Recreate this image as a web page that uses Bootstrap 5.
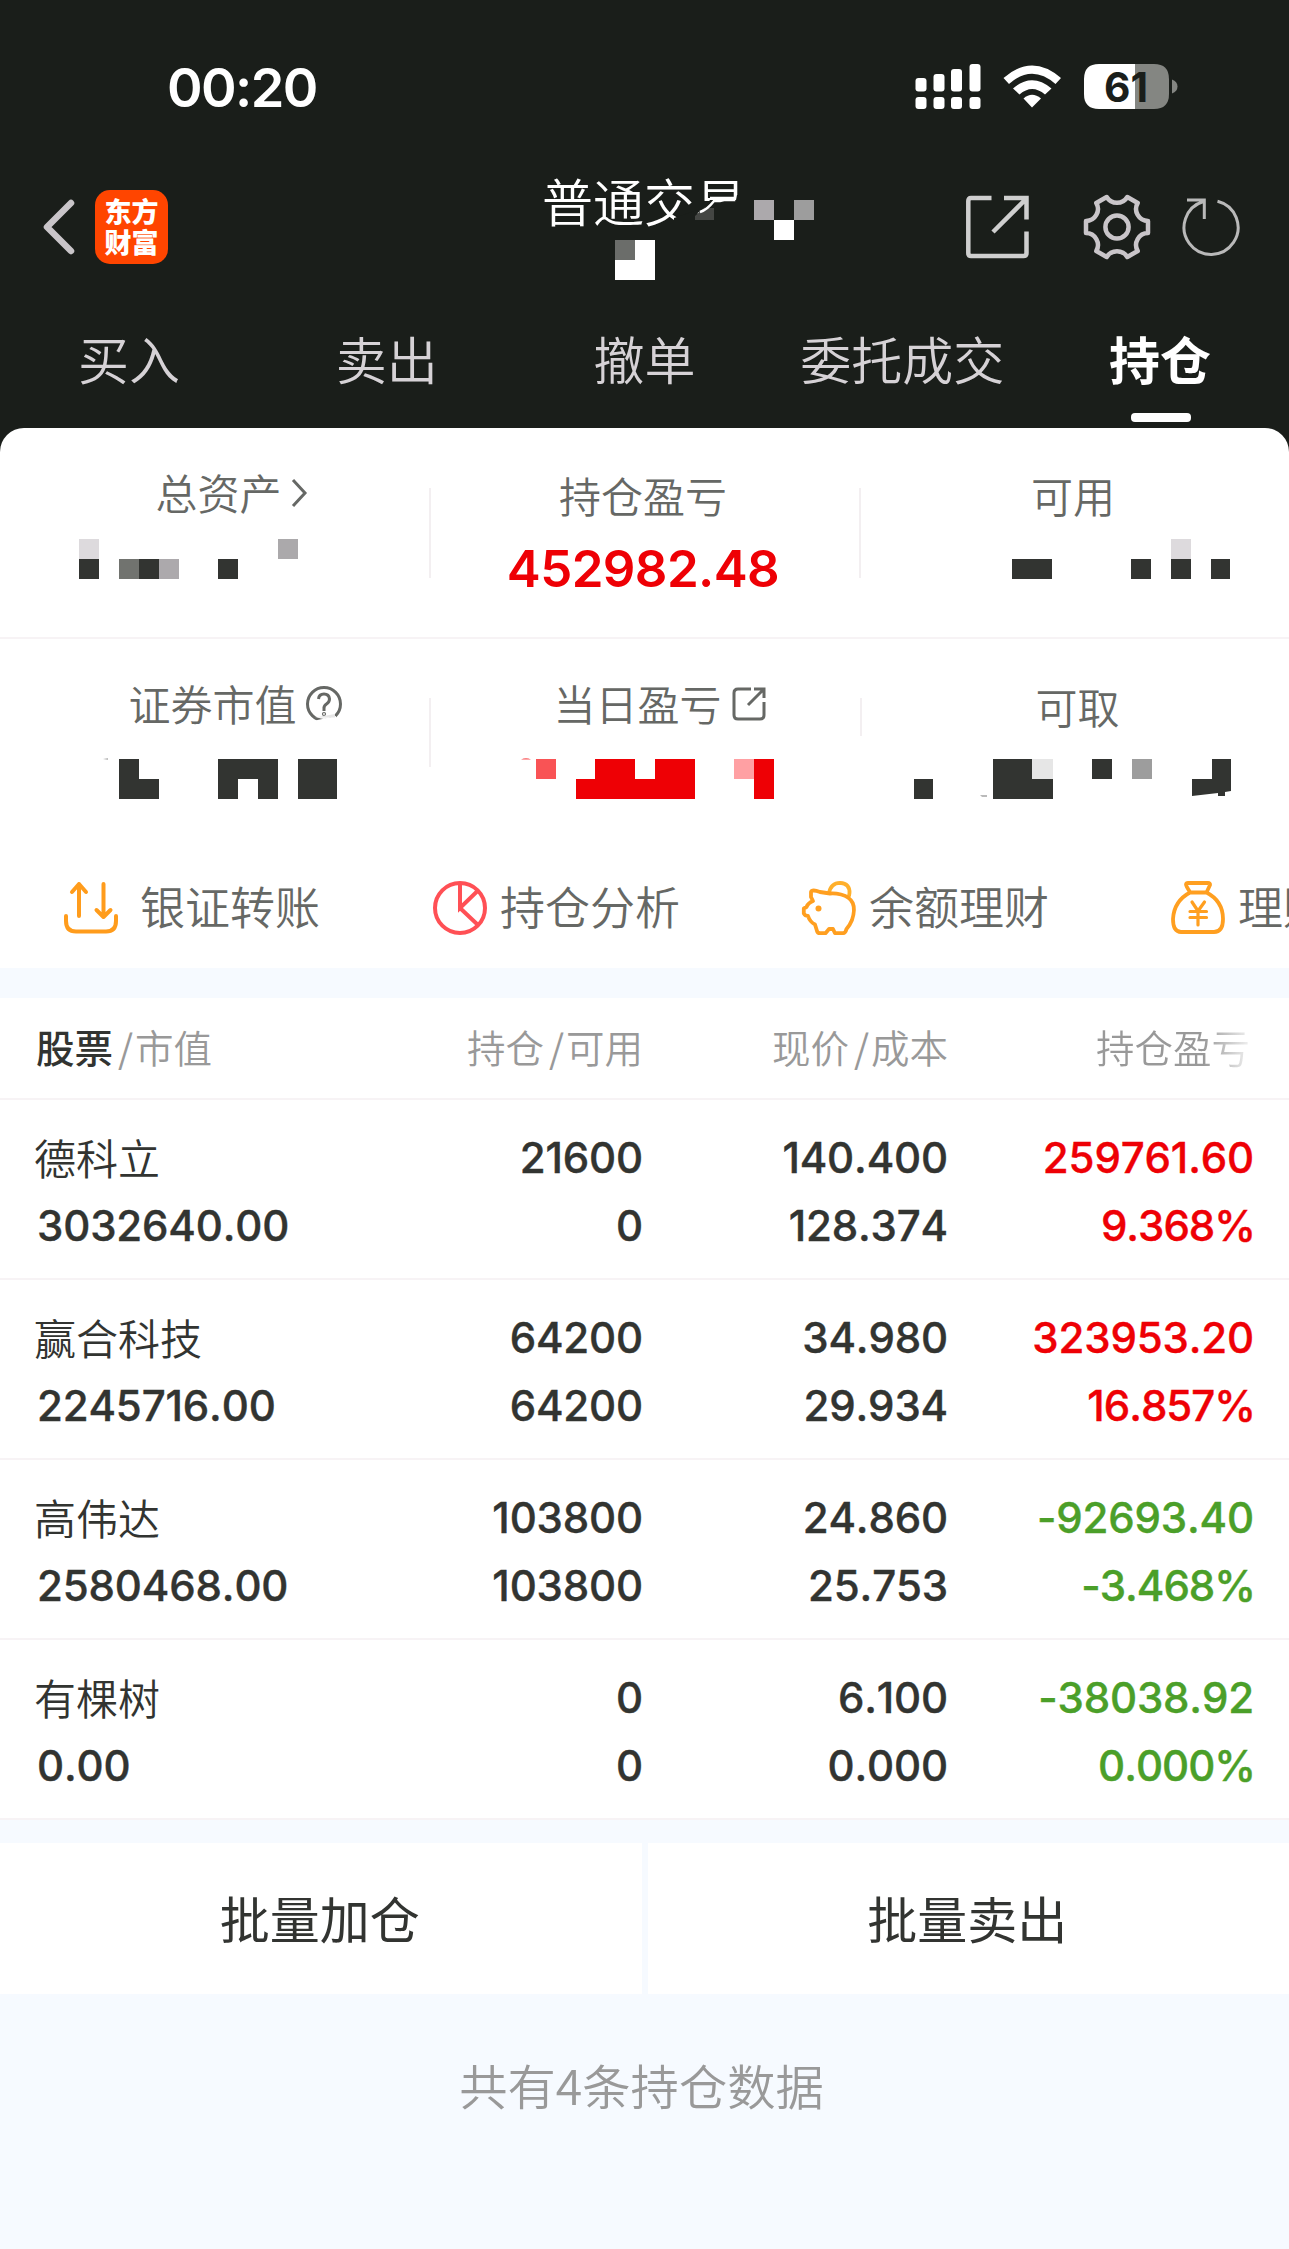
<!DOCTYPE html>
<html lang="zh-CN">
<head>
<meta charset="utf-8">
<meta name="viewport" content="width=device-width, initial-scale=1">
<title>持仓</title>
<link href="https://cdn.jsdelivr.net/npm/bootstrap@5.3.0/dist/css/bootstrap.min.css" rel="stylesheet">
<style>
  :root { --ink:#323431; --night:#1a1e1a; --mute:#666865; --up:#ee0005; --down:#4b9f29; --mist:#f6faff; --rule:#f7f3f5; }
  body { font-family:"Noto Sans CJK SC",sans-serif; font-weight:350; background:var(--mist); color:var(--ink); line-height:1; width:1289px; overflow-x:hidden; }
  svg { display:block; flex:none; overflow:visible; }
  .num { font-family:Inter,sans-serif; font-kerning:none; }
  .top-area { background:var(--night); height:428px; }
  .status-bar { height:150px; padding:24px 111px 0 167px; }
  .clock { font-size:54px; font-weight:600; line-height:54px; letter-spacing:-1.6px; padding-top:2px; }
  .title-bar { height:152px; padding:2px 48px 0 43px; }
  .app-logo { width:73px; height:74px; border-radius:15px; background:#ff4500; color:#fff; font:900 27px/31px "Noto Sans CJK SC",sans-serif; margin-left:20px; padding-top:5px; }
  .page-title { width:204px; height:152px; font-size:51px; line-height:60px; padding-top:20px; color:#fff; margin-left:374px; margin-top:-2px; white-space:nowrap; }
  .page-title svg { left:2px; top:0; }
  .tab-row { height:126px; }
  .tab-row .nav-link { font-size:51px; line-height:60px; padding:26px 0 0; color:#d6d2d6; height:126px; white-space:nowrap; }
  .tab-row .nav-link.active { color:#fff; font-weight:700; }
  .tab-row .nav-link.active::after { content:""; display:block; width:60px; height:9px; border-radius:4px; background:#fff; margin:25px auto 0; position:relative; left:1px; }
  .panel-wrap { background:var(--night); }
  .panel { background:#fff; border-radius:24px 24px 0 0; height:540px; }
  .stats-a { height:211px; border-bottom:2px solid var(--rule); }
  .stats-b { height:209px; }
  .stat { width:429px; }
  .stat-name { font-size:42px; line-height:48px; color:var(--mute); height:111px; padding-top:43px; }
  .stats-b .stat-name { height:120px; padding-top:40px; }
  .stat-name.raised { padding-top:40px; }
  .stats-b .stat-name.lowered { padding-top:43px; }
  .shift { margin-left:-6px; margin-right:6px; }
  .stat-value { font-size:51px; font-weight:600; line-height:60px; color:var(--up); letter-spacing:-.6px; }
  .divider { width:2px; background:#f3eff1; margin-top:60px; height:90px; flex:none; }
  .divider.cut { height:69px; margin-top:59px; } .divider.short { height:38px; margin-top:59px; }
  .tools { height:120px; padding-left:64px; }
  .tool { width:369px; flex:none; font-size:45px; line-height:54px; color:var(--mute); white-space:nowrap; }
  .tool span { margin:-2px 0 2px -1px; }
  .holdings { margin-top:30px; background:#fff; }
  .line-row { padding:0 35px 0 36px; border-bottom:2px solid var(--rule); }
  .c1 { width:301px; flex:none; } .c2 { width:306px; flex:none; } .c3 { width:305px; flex:none; } .c4 { width:306px; flex:none; }
  .head-row { height:102px; font-size:38.5px; line-height:97px; color:#999; white-space:nowrap; }
  .head-row b { color:var(--ink); font-weight:500; }
  .slash { padding:0 2px 0 5px; font-weight:400; }
  .fade-tail { background:linear-gradient(90deg,#999 0 68%,#ffffff00 102%); -webkit-background-clip:text; background-clip:text; color:transparent; padding-right:4px; }
  .stock { height:180px; padding-top:24px; font-size:42px; font-weight:500; line-height:68px; }
  .stock .name { font-size:42px; font-weight:350; margin:-1px 0 1px -2px; }
  .stock .num { -webkit-text-stroke:.4px currentColor; letter-spacing:-.15px; }
  .c1 .num { padding-left:1px; }
  .pct { letter-spacing:-1px; margin-right:-1px; }
  .rise { color:var(--up); } .fall { color:var(--down); }
  .bulk { margin-top:23px; gap:6px; height:151px; }
  .bulk .btn { background:#fff; border-radius:0; border:0; font-size:50px; color:var(--ink); padding:0 2px 3px 0; }
  .tally { font-size:48.3px; line-height:60px; color:#999; margin-top:60px; padding-right:6px; }
</style>
<script src="https://cdn.jsdelivr.net/npm/bootstrap@5.3.0/dist/js/bootstrap.bundle.min.js"></script>
</head>
<body>
<header class="top-area">
  <div class="status-bar d-flex justify-content-between align-items-center text-white">
    <span class="clock num">00:20</span>
    <svg width="263" height="46" viewBox="0 0 263 46">
      <g fill="#fff">
        <rect x="0.5" y="14" width="11" height="13.5" rx="3"/><rect x="18.5" y="10" width="11" height="17.5" rx="3"/><rect x="36" y="5" width="11" height="22.5" rx="3"/><rect x="54.500" y="0" width="11" height="27.500" rx="3"/>
        <rect x="0.500" y="33" width="11" height="12" rx="3"/><rect x="18.500" y="33" width="11" height="12" rx="3"/><rect x="36" y="33" width="11" height="12" rx="3"/><rect x="54.500" y="33" width="11" height="12" rx="3"/>
        <path d="M88.500 14Q117-11 146 14L140.500 20Q117-.5 94 20Z"/>
        <path d="M98 24.500Q117 8 136.500 24.500L130 30.500Q117 19.500 104.500 30.500Z"/>
        <path d="M108.500 34.500Q117 27 126 34.500L117 43.500Z"/>
      </g>
      <path d="M220 0h19q15 0 15 15v15q0 15-15 15h-19z" fill="#848682"/>
      <path d="M220 0h-36q-15 0-15 15v15q0 15 15 15h36z" fill="#fff"/>
      <path d="M257 15.500q5.500 2 5.500 7t-5.500 7z" fill="#848682"/>
      <text x="189" y="37.500" font-family="Inter,sans-serif" font-weight="700" font-size="41" fill="#1a1e1a" textLength="44" lengthAdjust="spacingAndGlyphs">61</text>
    </svg>
  </div>
  <div class="title-bar d-flex align-items-center">
    <svg width="32" height="56" viewBox="0 0 32 56"><path d="M28 4L4 28L28 52" fill="none" stroke="#c9c5c9" stroke-width="6.500" stroke-linecap="round" stroke-linejoin="round"/></svg>
    <div class="app-logo text-center">东方<br>财富</div>
    <div class="page-title position-relative">普通交易
      <svg class="position-absolute" width="290" height="152" viewBox="0 0 290 152">
        <path d="M130 78V68L153 60L154 66L166 50L192 50L193 45H194V20H220V82H130Z" fill="#1a1e1a"/>
        <path d="M151 70V66L160 58H170V70Z" fill="#444643"/>
        <path d="M166 48H190V50H180L176 51L170 51Q163 60 156 62" fill="none" stroke="#fff" stroke-width="2.500"/>
        <path d="M210 50h20v20h-20z" fill="#aca9ac"/><path d="M250 50h20v20h-20z" fill="#9d9d9d"/><path d="M230 70h20v20h-20z" fill="#fff"/>
        <path d="M71 90h40v40h-40z" fill="#fff"/><path d="M71 90h20v20h-20z" fill="#6b6d6a"/>
      </svg>
    </div>
    <div class="d-flex align-items-center ms-auto">
      <svg width="63" height="64" viewBox="0 0 63 64" fill="none" stroke="#cfcfcf" stroke-width="4.500"><path d="M25.500 3H5Q2.300 3 2.300 6V58Q2.300 61 5 61H57.500Q60.500 61 60.500 58V36.500M38 3H60.500V24.500M60 4L27 37"/></svg>
      <svg width="66" height="66" viewBox="-33 -33 66 66" fill="none" stroke="#c9c5c9" stroke-width="4.500" stroke-linejoin="round" style="margin-left:55px"><path d="M31 6A12 12 0 0 0 20.700 24L10.300 30A12 12 0 0 0-10.300 30L-20.700 24A12 12 0 0 0-31 6V-6A12 12 0 0 0-20.700-24L-10.300-30A12 12 0 0 0 10.300-30L20.700-24A12 12 0 0 0 31-6Z"/><circle r="11.600"/></svg>
      <svg width="58" height="60" viewBox="0 0 58 60" fill="none" stroke="#b9b9b9" stroke-width="3" style="margin-left:33px"><path d="M34.500 4.200A27 27 0 1 1 20.500 4.500M4 3H21.300V22"/></svg>
    </div>
  </div>
  <nav class="tab-row nav nav-fill flex-nowrap">
    <a class="nav-link w-100">买入</a><a class="nav-link w-100">卖出</a><a class="nav-link w-100">撤单</a><a class="nav-link w-100">委托成交</a><a class="nav-link w-100 active">持仓</a>
  </nav>
</header>

<main>
<div class="panel-wrap"><section class="panel">
  <div class="stats-a d-flex">
    <div class="stat">
      <div class="stat-name raised d-flex justify-content-center ps-4 ms-2"><span class="ps-1">总资产</span><svg width="24" height="30" viewBox="0 0 24 30" class="mt-2 ms-1"><path d="M6 3L18 16L6 29" transform="translate(1 1)" fill="none" stroke="#666865" stroke-width="3"/></svg></div>
      <svg width="429" height="40" viewBox="0 0 429 40" shape-rendering="crispEdges"><path d="M79 0h20v20h-20z" fill="#dddadd"/><path d="M278 0h20v20h-20z" fill="#aba9ab"/><path d="M79 20h20v20h-20zM139 20h20v20h-20zM218 20h20v20h-20z" fill="#323431"/><path d="M119 20h20v20h-20z" fill="#71736f"/><path d="M159 20h20v20h-20z" fill="#aca9ac"/></svg>
    </div>
    <div class="divider"></div>
    <div class="stat text-center">
      <div class="stat-name pe-1">持仓盈亏</div>
      <div class="stat-value num pe-1">452982.48</div>
    </div>
    <div class="divider"></div>
    <div class="stat">
      <div class="stat-name text-center pe-1">可用</div>
      <svg width="427" height="40" viewBox="862 0 427 40" shape-rendering="crispEdges"><path d="M1172 0h20v20h-20z" fill="#dddadd"/><path d="M1013 20h40v20h-40zM1132 20h20v20h-20zM1172 20h20v20h-20zM1212 20h19v20h-19z" fill="#323431"/></svg>
    </div>
  </div>
  <div class="stats-b d-flex">
    <div class="stat">
      <div class="stat-name shift d-flex justify-content-center ps-5"><span class="ps-1">证券市值</span><svg width="36" height="39" viewBox="0 0 36 39" class="ms-2 mt-1"><g transform="translate(1 3)" fill="none" stroke="#666865" stroke-width="3"><circle cx="18" cy="18" r="16.500"/><path d="M12.500 13Q13 8 18 8T23.500 13Q23.500 16 20.500 18T18 23V25"/><circle cx="18" cy="28" r=".6"/></g><path d="M8 38L31 33V38L20 42Z" fill="#fff"/><path d="M10 34.500L30 31V34.500Z" fill="#e6e6e6"/></svg></div>
      <svg width="429" height="40" viewBox="0 0 429 40"><path d="M119 0h20v20h20v20h-40zM218 0h60v40h-20v-20h-20v20h-20zM298 0h39v40h-39z" fill="#323431"/><path d="M103 0l5-1v2z" fill="#bbb"/></svg>
    </div>
    <div class="divider cut"></div>
    <div class="stat">
      <div class="stat-name shift d-flex justify-content-center ps-4 ms-1"><span class="ps-1">当日盈亏</span><svg width="34" height="34" viewBox="0 0 34 34" class="mt-2 ms-2" fill="none" stroke="#666865" stroke-width="3"><path transform="translate(2 0)" d="M19 2H6Q2 2 2 6V28Q2 32 6 32H28Q32 32 32 28V15M22 2H32V11M32 2L16 18"/></svg></div>
      <svg width="429" height="40" viewBox="431 0 429 40"><path d="M576 20h19v-20h40v20h20v-20h40v40h-119zM754 0h20v40h-20z" fill="#ee0005"/><path d="M536 0h20v20h-20z" fill="#f95355"/><path d="M734 0h20v20h-20z" fill="#ffa0a3"/><path d="M521 .5Q526-2 531 .5z" fill="#f95355"/></svg>
    </div>
    <div class="divider short"></div>
    <div class="stat">
      <div class="stat-name lowered text-center ps-1">可取</div>
      <svg width="427" height="40" viewBox="862 0 427 40"><path d="M914 20h19v20h-19zM993 0h39v20h21v20h-60zM1092 0h20v20h-20zM1212 0h19v32l-6 1v4h-7v-3l-26 3v-17h20z" fill="#323431"/><path d="M1032 0h21v20h-21z" fill="#e6e6e6"/><path d="M1132 0h20v20h-20z" fill="#9d9d9d"/><path d="M980 36.500h7v1h-5z" fill="#777"/></svg>
    </div>
  </div>
  <div class="tools d-flex align-items-center overflow-hidden">
    <div class="tool d-flex align-items-center"><svg width="54" height="54" viewBox="0 0 54 54" fill="none" stroke="#ff9c1c" stroke-width="4" stroke-linecap="round" stroke-linejoin="round" style="margin-right:23px"><path d="M15 35V3M8 11L15 3L22 11M39.500 3V36M32.500 29L39.500 36L46.500 29M2 35V40Q2 50.500 12 50.500H42Q52 50.500 52 40V35"/></svg><span>银证转账</span></div>
    <div class="tool d-flex align-items-center"><svg width="54" height="54" viewBox="0 0 54 54" fill="none" stroke="#ff5055" stroke-width="4" style="margin-right:14px"><circle cx="27" cy="27" r="25"/><path d="M27 2V27L44.500 10M27 27L45 44"/></svg><span>持仓分析</span></div>
    <div class="tool d-flex align-items-center"><svg width="54" height="54" viewBox="0 0 54 54" fill="none" stroke="#ff9f20" stroke-width="3.800" stroke-linejoin="round" style="margin-right:14px"><path d="M27 12Q29 1.800 38 1.800Q48 2.500 47.500 12Q47.500 14 46 17" stroke="#ffb02c"/><path d="M28 12.500L18 11Q10 8 9 11V16L11 20Q6 22 4.500 26L1.800 27.500V32.500Q3 35 6 35Q8 41 13 43.500L15 50Q15.500 52.200 18 52.200H23.500L27 48L31 48L33 52.200H41Q43.500 52 44.500 48Q48 44 50 39Q57 18 39 13.500Q33 12 28 12.500Z"/><circle cx="16.500" cy="27.500" r="3" fill="#ff9f20" stroke="none"/></svg><span>余额理财</span></div>
    <div class="tool d-flex align-items-center"><svg width="54" height="54" viewBox="0 0 54 54" fill="none" stroke="#ff9f20" stroke-width="3.800" stroke-linejoin="round" stroke-linecap="round" style="margin-right:14px"><path d="M19 11Q15 5 15 3.500Q15 2 17 2H37Q39.500 2 39 4L35.500 11.500Q52 20 52 38Q52 51 43 51H10Q2 51 2 38Q3 20 19 11.500H35.500"/><path d="M21 21L27 30L33.500 21M19 30.500H35.500M19 36.500H35.500M27 30V44" stroke-width="3.200"/></svg><span>理财</span></div>
  </div>
</section></div>

<section class="holdings">
  <div class="line-row head-row d-flex">
    <div class="c1"><b>股票</b><span class="slash">/</span>市值</div>
    <div class="c2 text-end">持仓<span class="slash">/</span>可用</div>
    <div class="c3 text-end">现价<span class="slash">/</span>成本</div>
    <div class="c4 text-end"><span class="fade-tail">持仓盈亏</span></div>
  </div>
  <div class="line-row stock d-flex">
    <div class="c1"><div class="name">德科立</div><div class="num">3032640.00</div></div>
    <div class="c2 num text-end">21600<br>0</div><div class="c3 num text-end">140.400<br>128.374</div><div class="c4 num text-end rise">259761.60<div class="pct">9.368%</div></div>
  </div>
  <div class="line-row stock d-flex">
    <div class="c1"><div class="name">赢合科技</div><div class="num">2245716.00</div></div>
    <div class="c2 num text-end">64200<br>64200</div><div class="c3 num text-end">34.980<br>29.934</div><div class="c4 num text-end rise">323953.20<div class="pct">16.857%</div></div>
  </div>
  <div class="line-row stock d-flex">
    <div class="c1"><div class="name">高伟达</div><div class="num">2580468.00</div></div>
    <div class="c2 num text-end">103800<br>103800</div><div class="c3 num text-end">24.860<br>25.753</div><div class="c4 num text-end fall">-92693.40<div class="pct">-3.468%</div></div>
  </div>
  <div class="line-row stock d-flex">
    <div class="c1"><div class="name">有棵树</div><div class="num">0.00</div></div>
    <div class="c2 num text-end">0<br>0</div><div class="c3 num text-end">6.100<br>0.000</div><div class="c4 num text-end fall">-38038.92<div class="pct">0.000%</div></div>
  </div>
</section>
<div class="bulk d-flex"><button class="btn w-50">批量加仓</button><button class="btn w-50">批量卖出</button></div>
<p class="tally text-center mb-0">共有4条持仓数据</p>
</main>
</body>
</html>
